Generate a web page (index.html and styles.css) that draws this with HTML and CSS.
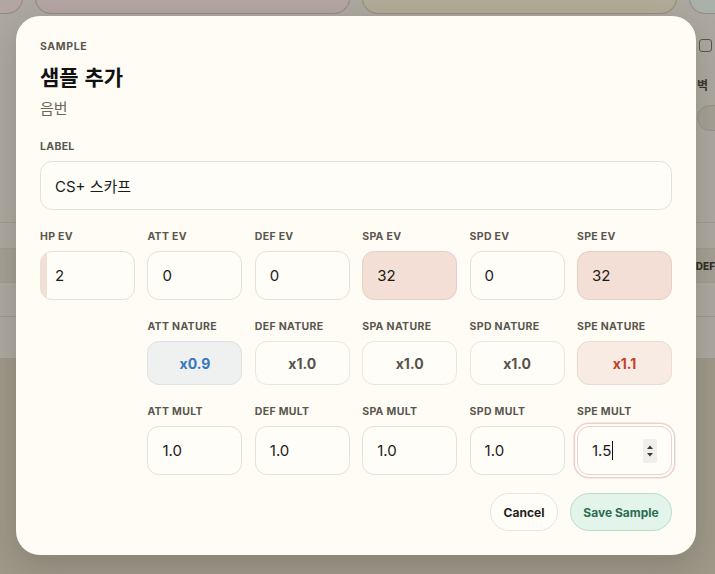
FILE: index.html
```html
<!DOCTYPE html>
<html lang="ko">
<head>
<meta charset="utf-8">
<title>샘플 추가</title>
<link rel="stylesheet" href="styles.css">
</head>
<body>
<div class="page">
  <div class="cards">
    <div class="card card-a"></div>
    <div class="card card-b"></div>
    <div class="card card-c"></div>
    <div class="card card-d"></div>
  </div>
  <div class="top-area">
    <div class="top-main"></div>
    <div class="sidebar">
      <span class="checkbox"></span>
      <span class="side-text">벽</span>
      <span class="side-pill"></span>
    </div>
  </div>
  <div class="table">
    <div class="trow trow-light"></div>
    <div class="trow trow-head"><span class="th">DEF</span></div>
    <div class="trow"></div>
    <div class="trow"></div>
  </div>
  <div class="lower"></div>
</div>

<div class="overlay">
  <div class="modal">
    <div class="eyebrow">SAMPLE</div>
    <h1 class="title">샘플 추가</h1>
    <div class="subtitle">음번</div>

    <div class="field label-field">
      <div class="flabel">LABEL</div>
      <div class="input">CS+ 스카프</div>
    </div>

    <div class="grid">
      <div class="field"><div class="flabel">HP EV</div><div class="input ev" style="--fill:6.25%">2</div></div>
      <div class="field"><div class="flabel">ATT EV</div><div class="input ev" style="--fill:0%">0</div></div>
      <div class="field"><div class="flabel">DEF EV</div><div class="input ev" style="--fill:0%">0</div></div>
      <div class="field"><div class="flabel">SPA EV</div><div class="input ev full" style="--fill:100%">32</div></div>
      <div class="field"><div class="flabel">SPD EV</div><div class="input ev" style="--fill:0%">0</div></div>
      <div class="field"><div class="flabel">SPE EV</div><div class="input ev full" style="--fill:100%">32</div></div>

      <div class="field col2"><div class="flabel">ATT NATURE</div><div class="nature minus">x0.9</div></div>
      <div class="field"><div class="flabel">DEF NATURE</div><div class="nature">x1.0</div></div>
      <div class="field"><div class="flabel">SPA NATURE</div><div class="nature">x1.0</div></div>
      <div class="field"><div class="flabel">SPD NATURE</div><div class="nature">x1.0</div></div>
      <div class="field"><div class="flabel">SPE NATURE</div><div class="nature plus">x1.1</div></div>

      <div class="field col2"><div class="flabel">ATT MULT</div><div class="input">1.0</div></div>
      <div class="field"><div class="flabel">DEF MULT</div><div class="input">1.0</div></div>
      <div class="field"><div class="flabel">SPA MULT</div><div class="input">1.0</div></div>
      <div class="field"><div class="flabel">SPD MULT</div><div class="input">1.0</div></div>
      <div class="field"><div class="flabel">SPE MULT</div>
        <div class="input focused"><span>1.5</span><span class="caret"></span>
          <span class="spinner">
            <svg width="8" height="14" viewBox="0 0 8 14"><path d="M4 1.5 L7 5 H1 Z" fill="#3a3a3a"/><path d="M4 12.5 L7 9 H1 Z" fill="#3a3a3a"/></svg>
          </span>
        </div>
      </div>
    </div>

    <div class="actions">
      <button class="btn btn-cancel">Cancel</button>
      <button class="btn btn-save">Save Sample</button>
    </div>
  </div>
</div>
</body>
</html>
```

FILE: styles.css
```css
* { box-sizing: border-box; }

html, body {
  margin: 0;
  padding: 0;
}

body {
  width: 715px;
  height: 574px;
  overflow: hidden;
  position: relative;
  font-family: Inter, "Noto Sans", "Noto Sans CJK KR", sans-serif;
  background: #e8e5df;
}

/* ---------- background page ---------- */
.page {
  display: flex;
  flex-direction: column;
  height: 574px;
}

.cards {
  display: flex;
  gap: 12px;
  margin-left: -292px;
  margin-top: -46px;
  height: 60px;
  flex: none;
}

.card {
  width: 315px;
  height: 60px;
  flex: none;
  border-radius: 16px;
  border: 1px solid rgba(120, 100, 90, 0.35);
}
.card-a { background: #f3e2e0; }
.card-b { background: #f5e1e4; }
.card-c { background: #f3ead6; }
.card-d { background: #e4f3ef; }

.top-area {
  display: flex;
  height: 208px;
  flex: none;
}
.top-main { flex: 1; }

.sidebar {
  width: 34px;
  padding: 25px 0 0 16px;
  display: flex;
  flex-direction: column;
  align-items: flex-start;
}
.checkbox {
  width: 13px;
  height: 13px;
  border: 1.5px solid #6b6659;
  border-radius: 3px;
  margin-left: 2px;
}
.side-text {
  margin-top: 24px;
  font-size: 12px;
  font-weight: 600;
  color: #3a372f;
}
.side-pill {
  margin-top: 12px;
  width: 40px;
  height: 26px;
  border-radius: 13px;
  background: #ddd9cf;
  border: 1px solid #c9c4b7;
}

.table { flex: none; }
.trow {
  height: 34px;
  border-top: 1px solid #d7d2c6;
}
.trow-light { height: 26px; }
.trow-head {
  height: 34px;
  background: #dcd8cd;
  display: flex;
  justify-content: flex-end;
  align-items: center;
  padding-right: 0;
}
.th {
  font-size: 10px;
  font-weight: 800;
  color: #2f2c26;
  letter-spacing: 0;
}
.lower {
  flex: 1;
  background: #d3cdbd;
  margin-top: 8px;
}

/* ---------- overlay & modal ---------- */
.overlay {
  position: absolute;
  inset: 0;
  background: rgba(60, 55, 40, 0.35);
  padding: 16px;
}

.modal {
  width: 680px;
  height: 539px;
  background: #fefcf5;
  border-radius: 24px;
  padding: 24px 24px 24px;
  box-shadow: 0 10px 30px rgba(40, 35, 20, 0.18);
  display: flex;
  flex-direction: column;
}

.eyebrow {
  font-size: 10.5px;
  line-height: 14px;
  font-weight: 700;
  letter-spacing: 0.06em;
  color: #5a564d;
}

.title {
  margin: 8px 0 0;
  font-size: 21px;
  line-height: 28px;
  font-weight: 700;
  color: #111;
  font-family: "Noto Sans CJK KR", "Noto Sans", sans-serif;
}

.subtitle {
  margin-top: 8px;
  font-size: 15px;
  line-height: 20px;
  color: #6b675e;
  font-family: "Noto Sans CJK KR", "Noto Sans", sans-serif;
}

.field {
  display: flex;
  flex-direction: column;
  gap: 7px;
  min-width: 0;
}
.label-field { margin-top: 22px; }

.flabel {
  font-size: 10.5px;
  line-height: 14px;
  font-weight: 700;
  letter-spacing: 0.03em;
  color: #5a564d;
  white-space: nowrap;
}

.input {
  height: 49px;
  border: 1px solid #e6e1d7;
  border-radius: 12px;
  background: #fffdf8;
  padding-left: 14px;
  display: flex;
  align-items: center;
  font-size: 15px;
  color: #1c1b18;
  font-family: Inter, "Noto Sans CJK KR", sans-serif;
  position: relative;
}

.ev {
  background: linear-gradient(to right, #f3dfd6 var(--fill), #fffdf8 var(--fill));
}
.ev.full { border-color: #e6cfc5; }

.grid {
  margin-top: 20px;
  display: grid;
  grid-template-columns: repeat(6, 1fr);
  column-gap: 12.4px;
  row-gap: 20px;
}
.col2 { grid-column-start: 2; }

.nature {
  height: 44px;
  border: 1px solid #ebe6dc;
  border-radius: 12px;
  background: #fffdf8;
  display: flex;
  align-items: center;
  justify-content: center;
  font-size: 14px;
  font-weight: 700;
  color: #57534b;
}
.nature.minus {
  background: #eef1ef;
  border-color: #dde2e0;
  color: #3677c0;
}
.nature.plus {
  background: #f8ebe3;
  border-color: #eedad0;
  color: #c23f2c;
}

.focused {
  border-color: #e9d3ca;
  box-shadow: 0 0 0 2px #fffdf8, 0 0 0 3.5px #ecd2c7;
}
.caret {
  width: 1px;
  height: 19px;
  background: #111;
  margin-left: 1px;
}
.spinner {
  position: absolute;
  right: 14px;
  top: 12px;
  width: 14px;
  height: 24px;
  background: #f1efeb;
  border-radius: 2px;
  display: flex;
  align-items: center;
  justify-content: center;
}

.actions {
  margin-top: auto;
  display: flex;
  justify-content: flex-end;
  gap: 12px;
}

.btn {
  height: 38px;
  border-radius: 19px;
  font-family: Inter, sans-serif;
  font-size: 12px;
  font-weight: 700;
  padding: 0 12px;
  white-space: nowrap;
  cursor: pointer;
}
.btn-cancel {
  background: #fffdf8;
  border: 1px solid #ece4dc;
  color: #1f1e1b;
  width: 68px;
}
.btn-save {
  background: #e3f4ea;
  border: 1px solid #bcdccb;
  color: #2d6e50;
  width: 102px;
}
```
